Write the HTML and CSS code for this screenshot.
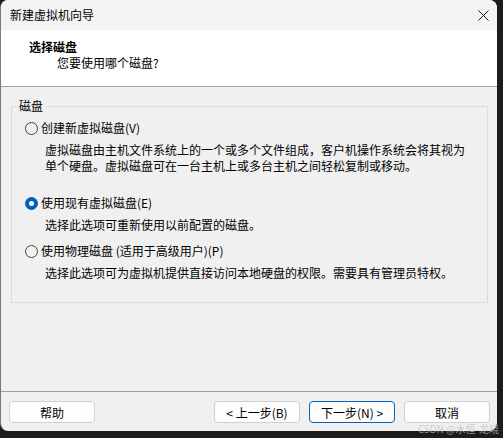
FILE: index.html
```html
<!DOCTYPE html>
<html lang="zh-CN">
<head>
    <meta charset="UTF-8">
    <title>新建虚拟机向导</title>
    <link rel="stylesheet" href="styles.css">
</head>
<body>
    <div class="window">
        <div class="titlebar">
            <span class="title">新建虚拟机向导</span>
            <svg class="close" width="11" height="11" viewBox="0 0 11 11">
                <path d="M0.5 0.5 L10.5 10.5 M10.5 0.5 L0.5 10.5" stroke="#1a1a1a" stroke-width="1" fill="none"/>
            </svg>
        </div>

        <div class="header">
            <div class="heading">选择磁盘</div>
            <div class="subheading">您要使用哪个磁盘?</div>
        </div>

        <div class="content">
            <fieldset class="group">
                <legend>磁盘</legend>

                <div class="option option-new">
                    <label class="radio-row"><span class="radio"></span>创建新虚拟磁盘(V)</label>
                    <p class="desc">虚拟磁盘由主机文件系统上的一个或多个文件组成，客户机操作系统会将其视为<br>单个硬盘。虚拟磁盘可在一台主机上或多台主机之间轻松复制或移动。</p>
                </div>

                <div class="option option-existing">
                    <label class="radio-row"><span class="radio checked"></span>使用现有虚拟磁盘(E)</label>
                    <p class="desc">选择此选项可重新使用以前配置的磁盘。</p>
                </div>

                <div class="option">
                    <label class="radio-row"><span class="radio"></span>使用物理磁盘 (适用于高级用户)(P)</label>
                    <p class="desc">选择此选项可为虚拟机提供直接访问本地硬盘的权限。需要具有管理员特权。</p>
                </div>
            </fieldset>
        </div>

        <div class="footer">
            <button class="btn">帮助</button>
            <div class="nav-buttons">
                <button class="btn">&lt; 上一步(B)</button>
                <button class="btn btn-default">下一步(N) &gt;</button>
                <button class="btn">取消</button>
            </div>
        </div>
    </div>

    <div class="watermark">CSDN @水恒-龙晓</div>
</body>
</html>
```

FILE: styles.css
```css
:root {
    --face-color: #f0f0f0;
    --line-color: #a0a0a0;
    --text-color: #000;
    --accent-color: #0067c0;
}

body {
    margin: 0;
    width: 503px;
    height: 438px;
    background-color: #1c1c1c;
    font-family: "Noto Sans CJK SC", "Noto Sans", sans-serif;
    font-size: 12px;
    line-height: 16px;
    color: var(--text-color);
    position: relative;
    overflow: hidden;
}

.window {
    width: 497px;
    height: 431px;
    box-sizing: border-box;
    border-left: 1px solid #7a7a7a;
    border-radius: 8px;
    overflow: hidden;
    background: var(--face-color);
    display: flex;
    flex-direction: column;
}

.titlebar {
    height: 30px;
    flex-shrink: 0;
    background: #f3f3f3;
    display: flex;
    align-items: center;
    justify-content: space-between;
    padding: 0 8px 0 9px;
}

.close {
    display: block;
}

.header {
    height: 48px;
    flex-shrink: 0;
    background: #fff;
    border-bottom: 1px solid var(--line-color);
    padding: 9px 0 0 28px;
    box-sizing: content-box;
    height: 47px;
}

.heading {
    font-weight: bold;
}

.subheading {
    margin-left: 28px;
}

.content {
    flex: 1;
    padding: 11px 9px 0 10px;
}

.group {
    margin: 0;
    padding: 6px 13px 21px 13px;
    border: 1px solid #dcdcdc;
}

.group legend {
    margin-left: -8px;
    padding: 0 2px;
    line-height: 16px;
}

.option-new {
    margin-bottom: 21px;
}

.option-existing {
    margin-bottom: 10px;
}

.radio-row {
    display: flex;
    align-items: center;
    height: 16px;
}

.radio {
    width: 13px;
    height: 13px;
    box-sizing: border-box;
    border: 1px solid #444;
    border-radius: 50%;
    margin-right: 3px;
    position: relative;
}

.radio.checked {
    background: #005fb8;
    border-color: #005fb8;
}

.radio.checked::after {
    content: "";
    position: absolute;
    left: 3px;
    top: 3px;
    width: 5px;
    height: 5px;
    border-radius: 50%;
    background: #fff;
}

.desc {
    margin: 6px 0 0 20px;
}

.footer {
    height: 40px;
    flex-shrink: 0;
    border-top: 1px solid var(--line-color);
    display: flex;
    align-items: flex-start;
    justify-content: space-between;
    padding: 9px 7px 0 8px;
    box-sizing: border-box;
}

.nav-buttons {
    display: flex;
    gap: 9px;
}

.btn {
    width: 86px;
    height: 22px;
    padding: 0;
    background: #fdfdfd;
    border: 1px solid #d0d0d0;
    border-radius: 4px;
    font-family: inherit;
    font-size: 12px;
    color: var(--text-color);
}

.btn-default {
    border-color: var(--accent-color);
}

.watermark {
    position: absolute;
    right: 4px;
    bottom: 3px;
    font-size: 10px;
    line-height: 12px;
    color: rgba(190, 190, 190, 0.75);
}
```
